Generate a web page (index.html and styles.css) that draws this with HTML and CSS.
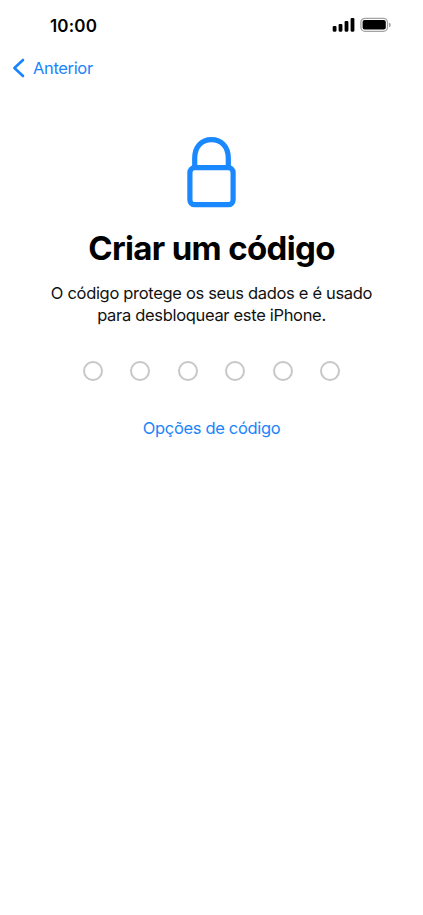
FILE: index.html
```html
<!DOCTYPE html>
<html lang="pt">
<head>
<meta charset="utf-8">
<title>Criar um código</title>
<link rel="stylesheet" href="styles.css">
</head>
<body>
<header class="status">
  <span class="time">10:00</span>
  <svg class="indicators" width="60" height="16" viewBox="0 0 60 16">
    <rect x=".7" y="9" width="3.8" height="5.7" rx="1.1"/>
    <rect x="6.6" y="7" width="3.8" height="7.7" rx="1.1"/>
    <rect x="12.6" y="4" width="3.8" height="10.7" rx="1.1"/>
    <rect x="18.6" y="1" width="3.8" height="13.7" rx="1.1"/>
    <rect class="shell" x="28.9" y="1.3" width="26.6" height="13" rx="4"/>
    <rect x="30.6" y="3" width="23.2" height="9.6" rx="2.1"/>
    <path class="nub" d="M57 5.6q1.8.7 1.8 2.3T57 10.2z"/>
  </svg>
</header>
<nav class="nav">
  <a class="back">
    <svg class="chevron" width="14" height="20" viewBox="0 0 14 20"><path d="M12 2 3.4 10l8.6 8"/></svg>
    <span>Anterior</span>
  </a>
</nav>
<main class="content">
  <svg class="lock" width="50" height="72" viewBox="0 0 50 72">
    <path d="M7.7 31.5V22.5C7.7 10.5 14.8 3.7 24.5 3.7S41.3 10.5 41.3 22.5v9"/>
    <rect x="2.9" y="31.7" width="43.2" height="37" rx="4.8"/>
  </svg>
  <h1 class="title">Criar um código</h1>
  <p class="description">O código protege os seus dados e é usado<br>para desbloquear este iPhone.</p>
  <div class="digits"><i></i><i></i><i></i><i></i><i></i><i></i></div>
  <a class="options">Opções de código</a>
</main>
</body>
</html>
```
FILE: styles.css
```css
* { box-sizing: border-box; }
body {
  margin: 0;
  min-height: 915px;
  background: #fff;
  color: #000;
  font-family: Inter, "Liberation Sans", sans-serif;
}
.status {
  display: flex;
  justify-content: space-between;
  align-items: center;
  height: 50px;
  padding: 0 31px 0 50px;
}
.time { padding-top: 1px; font-size: 17px; font-weight: 600; letter-spacing: .15px; }
.indicators .shell { fill: none; stroke: #a3a3a3; stroke-width: 1.3; }
.indicators .nub { fill: #a3a3a3; }
.nav { height: 36px; padding-left: 11px; }
.back {
  display: inline-flex;
  align-items: center;
  gap: 8px;
  height: 36px;
  color: #1a84fa;
  font-size: 16.5px;
  letter-spacing: -.35px;
}
.chevron path {
  fill: none;
  stroke: #1a84fa;
  stroke-width: 2.6;
  stroke-linecap: round;
  stroke-linejoin: round;
}
.content {
  display: flex;
  flex-direction: column;
  align-items: center;
  padding-top: 50px;
}
.lock { fill: none; stroke: #1a88ff; stroke-width: 5.2; }
.title {
  margin: 20px 0 0;
  font-size: 33px;
  line-height: 40px;
  font-weight: 700;
  letter-spacing: -.65px;
  white-space: nowrap;
}
.description {
  margin: 14px 0 0;
  color: #111;
  font-size: 16.5px;
  line-height: 22px;
  letter-spacing: -.32px;
  text-align: center;
  white-space: nowrap;
}
.digits { display: flex; gap: 27.4px; margin-top: 35px; }
.digits i { width: 20px; height: 20px; border: 2px solid #c7c7c7; border-radius: 50%; }
.options {
  margin-top: 36px;
  color: #1a84fa;
  font-size: 16.5px;
  line-height: 22px;
  letter-spacing: -.33px;
}
```
